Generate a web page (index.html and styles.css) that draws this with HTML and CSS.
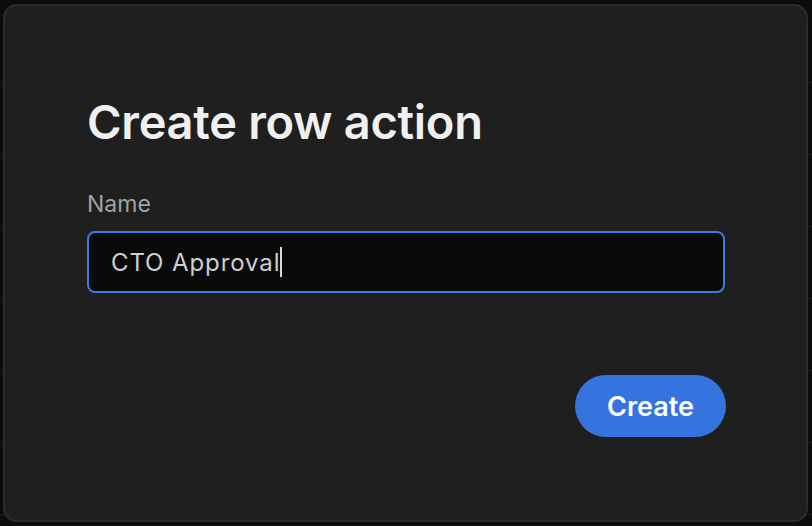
FILE: index.html
```html
<!DOCTYPE html>
<html>
<head>
<meta charset="utf-8">
<link rel="stylesheet" href="styles.css">
</head>
<body>
<div class="backdrop">
  <div class="rows">
    <div class="row"></div><div class="row"></div><div class="row"></div><div class="row"></div><div class="row"></div><div class="row"></div><div class="row"></div>
  </div>
  <div class="modal">
    <h1 class="title">Create row action</h1>
    <label class="label">Name</label>
    <div class="input"><span class="value">CTO Approval</span><span class="caret"></span></div>
    <div class="actions"><button class="btn">Create</button></div>
  </div>
</div>
</body>
</html>
```
FILE: styles.css
```css
html, body { margin: 0; padding: 0; }
body { width: 812px; height: 526px; overflow: hidden; background: #0c0c0c; font-family: Inter, "Noto Sans", sans-serif; }
.backdrop { position: relative; width: 812px; height: 526px; }
.rows { display: flex; flex-direction: column; padding-top: 11px; }
.row { height: 71px; border-bottom: 1px solid #1c1c1c; }
.modal {
  position: absolute; left: 3px; top: 4px; width: 805px; height: 518px;
  background: #1f1f1f; border: 2px solid #2c2c2c; border-radius: 14px;
  padding: 0 81px 0 82px; box-sizing: border-box;
  display: flex; flex-direction: column;
}
.title { margin: 88px 0 0 0; font-size: 47px; font-weight: 600; color: #f0f0f0; letter-spacing: -0.3px; line-height: 56px; }
.label { margin-top: 40px; font-size: 23px; color: #a3a3a3; line-height: 28px; }
.input {
  margin-top: 13px; height: 62px; box-sizing: border-box; border: 2px solid #3b7ce0; border-radius: 8px;
  background: #0a0a0a; display: flex; align-items: center; padding-left: 22px;
}
.value { font-family: Inter, sans-serif; font-size: 24px; font-weight: 400; color: #cfcfcf; letter-spacing: 0.9px; }
.caret { width: 2px; height: 30px; background: #d8d8d8; margin-left: 0; }
.actions { display: flex; justify-content: flex-end; margin-top: 82px; }
.btn {
  height: 62px; width: 151px; border: none; border-radius: 31px; background: #3574df; color: #fff;
  font-family: Inter, sans-serif; font-size: 27px; font-weight: 600; margin-right: -1px;
}
```
